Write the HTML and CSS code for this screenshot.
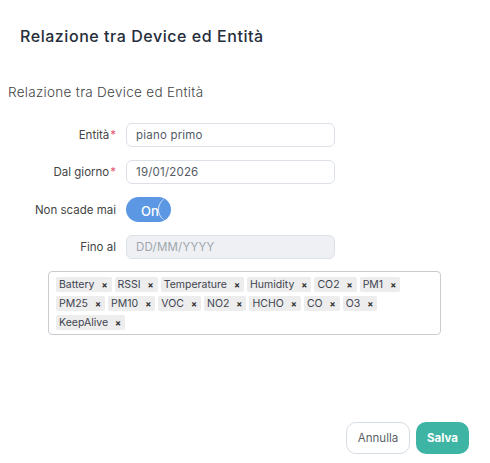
FILE: index.html
```html
<!DOCTYPE html>
<html lang="it">
<head>
<meta charset="utf-8">
<link rel="stylesheet" href="styles.css">
</head>
<body>
<div class="modal">
  <header class="modal-header">Relazione tra Device ed Entità</header>
  <h2 class="section-title">Relazione tra Device ed Entità</h2>
  <div class="form">
    <label class="label">Entità<span class="req">*</span></label>
    <div class="input">piano primo</div>
    <label class="label">Dal giorno<span class="req">*</span></label>
    <div class="input">19/01/2026</div>
    <label class="label">Non scade mai</label>
    <div class="toggle-cell"><div class="toggle"><span class="toggle-text">On</span><span class="knob"></span></div></div>
    <label class="label">Fino al</label>
    <div class="input disabled">DD/MM/YYYY</div>
  </div>
  <div class="tags">
    <span class="tag">Battery<span class="x">×</span></span>
    <span class="tag">RSSI<span class="x">×</span></span>
    <span class="tag">Temperature<span class="x">×</span></span>
    <span class="tag">Humidity<span class="x">×</span></span>
    <span class="tag">CO2<span class="x">×</span></span>
    <span class="tag">PM1<span class="x">×</span></span>
    <span class="tag">PM25<span class="x">×</span></span>
    <span class="tag">PM10<span class="x">×</span></span>
    <span class="tag">VOC<span class="x">×</span></span>
    <span class="tag">NO2<span class="x">×</span></span>
    <span class="tag">HCHO<span class="x">×</span></span>
    <span class="tag">CO<span class="x">×</span></span>
    <span class="tag">O3<span class="x">×</span></span>
    <span class="tag">KeepAlive<span class="x">×</span></span>
  </div>
  <div class="footer">
    <button class="btn btn-cancel">Annulla</button>
    <button class="btn btn-save">Salva</button>
  </div>
</div>
</body>
</html>
```
FILE: styles.css
```css
* { box-sizing: border-box; }
html, body { margin: 0; padding: 0; background: #fff; }
body {
  font-family: "Inter", "Open Sans", sans-serif;
  color: #3c4250;
  width: 490px;
  height: 463px;
  overflow: hidden;
}
.modal { display: flex; flex-direction: column; }
.modal-header {
  padding: 26px 0 0 20px;
  height: 48px;
  font-size: 16px;
  font-weight: 500;
  color: #262d3b;
  letter-spacing: 0.55px;
}
.section-title {
  margin: 35px 0 0 8px;
  font-size: 13.5px;
  font-weight: 300;
  color: #444;
  line-height: 18px;
  letter-spacing: 0.3px;
}
.form {
  margin-top: 22px;
  display: grid;
  grid-template-columns: 116px 209px;
  column-gap: 10px;
  row-gap: 13px;
  align-items: center;
}
.label {
  text-align: right;
  font-size: 11.5px;
  color: #444;
  font-weight: 400;
}
.req { color: #e5566f; margin-left: 1px; }
.input {
  height: 24px;
  border: 1px solid #dce1e8;
  border-radius: 6px;
  padding: 0 9px;
  font-size: 11.5px;
  line-height: 22px;
  color: #555b66;
  letter-spacing: 0.2px;
}
.input.disabled { background: #eef0f4; color: #a0a5ad; }
.toggle-cell { display: flex; }
.toggle {
  position: relative;
  width: 45px;
  height: 25px;
  border-radius: 13px;
  background: #5b97e3;
  display: flex;
  align-items: center;
  overflow: hidden;
}
.toggle-text {
  color: #fff;
  font-size: 13px;
  font-weight: 500;
  margin-left: 15px;
  margin-top: 3px;
}
.knob {
  position: absolute;
  left: 32px;
  top: 0;
  width: 25px;
  height: 25px;
  border-radius: 50%;
  border-left: 1.5px solid #dfe8f8;
}
.tags {
  margin: 12px 0 0 48px;
  width: 393px;
  height: 64px;
  border: 1px solid #c9ccd1;
  border-radius: 4px;
  padding: 5px 7px;
  display: flex;
  flex-wrap: wrap;
  gap: 4px 3px;
  align-content: flex-start;
}
.tag {
  background: #ededed;
  border-radius: 2px;
  height: 15px;
  line-height: 15px;
  font-size: 10.5px;
  color: #3f4450;
  padding: 0 4px 0 3px;
  display: inline-flex;
  align-items: center;
}
.x {
  font-size: 9px;
  font-weight: 700;
  margin-left: 7px;
  color: #333;
}
.footer {
  display: flex;
  justify-content: flex-end;
  gap: 6px;
  margin-top: 87px;
  padding-right: 21px;
}
.btn {
  height: 32px;
  border-radius: 10px;
  font-family: inherit;
  font-size: 11.5px;
  padding: 0;
  cursor: pointer;
}
.btn-cancel {
  width: 64px;
  background: #fff;
  border: 1px solid #d6dce4;
  color: #5a5f68;
}
.btn-save {
  width: 53px;
  background: #3db4a4;
  border: none;
  color: #fff;
  font-weight: 700;
}
```
